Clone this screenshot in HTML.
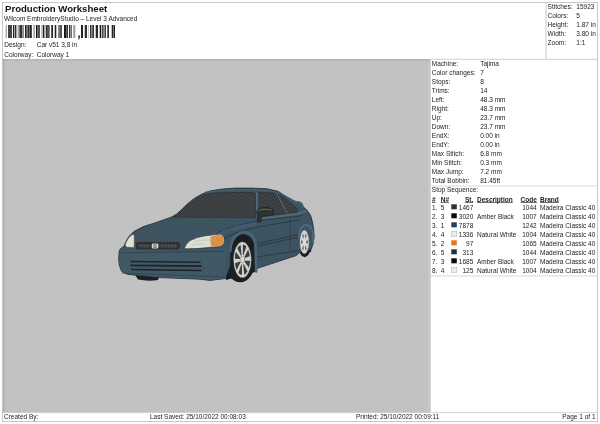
<!DOCTYPE html>
<html><head><meta charset="utf-8"><style>
html,body{margin:0;padding:0;background:#fff;width:600px;height:424px;overflow:hidden}
svg{display:block;font-family:"Liberation Sans",sans-serif;will-change:transform}
</style></head><body>
<svg width="600" height="424" viewBox="0 0 600 424">
<rect x="0" y="0" width="600" height="424" fill="#fff"/>
<rect x="2" y="59.5" width="428.5" height="353" fill="#c2c2c2"/>
<rect x="428.5" y="59.5" width="2" height="353" fill="#c9c9c9"/>
<rect x="2.2" y="59.5" width="2.2" height="353" fill="#b0b0b0"/>
<g fill="none" stroke="#c8c8c8" stroke-width="1">
<rect x="2.5" y="2.5" width="595" height="419"/>
<line x1="546" y1="2" x2="546" y2="58.5"/>
</g>
<line x1="2" y1="59.8" x2="430.5" y2="59.8" stroke="#a4a4a4" stroke-width="1"/>
<line x1="430.5" y1="59.3" x2="598" y2="59.3" stroke="#c4c4c4" stroke-width="0.8"/>
<line x1="430" y1="186" x2="598" y2="186" stroke="#cfcfcf" stroke-width="0.8"/>
<line x1="430" y1="276" x2="598" y2="276" stroke="#cfcfcf" stroke-width="0.8"/>
<line x1="2" y1="412.6" x2="598" y2="412.6" stroke="#c8c8c8" stroke-width="0.8"/>
<rect x="5.6" y="25" width="1.4" height="13" fill="#aaa"/>
<rect x="8.0" y="25" width="4.0" height="13" fill="#444"/>
<rect x="13.0" y="25" width="1.2" height="13" fill="#222"/>
<rect x="14.2" y="25" width="0.8" height="13" fill="#999"/>
<rect x="15.0" y="25" width="1.4" height="13" fill="#333"/>
<rect x="17.6" y="25" width="1.0" height="13" fill="#999"/>
<rect x="18.6" y="25" width="1.4" height="13" fill="#777"/>
<rect x="20.0" y="25" width="2.3" height="13" fill="#333"/>
<rect x="22.3" y="25" width="1.7" height="13" fill="#888"/>
<rect x="25.0" y="25" width="1.7" height="13" fill="#222"/>
<rect x="26.7" y="25" width="1.3" height="13" fill="#777"/>
<rect x="28.0" y="25" width="1.7" height="13" fill="#333"/>
<rect x="30.0" y="25" width="1.8" height="13" fill="#222"/>
<rect x="33.3" y="25" width="1.7" height="13" fill="#aaa"/>
<rect x="36.0" y="25" width="1.3" height="13" fill="#111"/>
<rect x="37.3" y="25" width="2.7" height="13" fill="#555"/>
<rect x="41.0" y="25" width="0.8" height="13" fill="#bbb"/>
<rect x="42.7" y="25" width="1.7" height="13" fill="#222"/>
<rect x="45.7" y="25" width="1.3" height="13" fill="#333"/>
<rect x="47.0" y="25" width="2.7" height="13" fill="#555"/>
<rect x="51.3" y="25" width="1.7" height="13" fill="#222"/>
<rect x="54.7" y="25" width="1.6" height="13" fill="#222"/>
<rect x="58.0" y="25" width="1.3" height="13" fill="#888"/>
<rect x="59.3" y="25" width="2.7" height="13" fill="#555"/>
<rect x="64.0" y="25" width="2.0" height="13" fill="#1a1a1a"/>
<rect x="66.3" y="25" width="1.7" height="13" fill="#333"/>
<rect x="69.0" y="25" width="1.3" height="13" fill="#333"/>
<rect x="70.7" y="25" width="1.0" height="13" fill="#333"/>
<rect x="73.3" y="25" width="2.0" height="13" fill="#999"/>
<rect x="81.0" y="25" width="2.0" height="13" fill="#222"/>
<rect x="84.7" y="25" width="2.3" height="13" fill="#333"/>
<rect x="88.0" y="25" width="0.7" height="13" fill="#bbb"/>
<rect x="90.0" y="25" width="1.3" height="13" fill="#333"/>
<rect x="91.3" y="25" width="1.0" height="13" fill="#777"/>
<rect x="92.3" y="25" width="1.7" height="13" fill="#333"/>
<rect x="95.7" y="25" width="2.3" height="13" fill="#2a2a2a"/>
<rect x="99.7" y="25" width="1.3" height="13" fill="#111"/>
<rect x="101.7" y="25" width="1.3" height="13" fill="#444"/>
<rect x="103.0" y="25" width="1.6" height="13" fill="#888"/>
<rect x="104.6" y="25" width="1.4" height="13" fill="#444"/>
<rect x="107.3" y="25" width="1.7" height="13" fill="#333"/>
<rect x="111.7" y="25" width="1.3" height="13" fill="#222"/>
<rect x="113.0" y="25" width="0.6" height="13" fill="#888"/>
<rect x="113.6" y="25" width="1.4" height="13" fill="#222"/>
<path d="M78.2,35.4 L79.9,35.4 L79.9,37.4 Q79.8,39.2 78.4,39.8 L78.1,39.2 Q78.9,38.7 79,37.4 L78.2,37.4 Z" fill="#222"/>
<defs>
<pattern id="stripeW" patternUnits="userSpaceOnUse" width="2.2" height="2.2" patternTransform="rotate(35)">
<rect width="2.2" height="2.2" fill="#34373a"/><rect width="0.7" height="2.2" fill="#4e5255"/>
</pattern>
<clipPath id="bodyclip"><path d="M119.6,249.8 L121.5,248 L124.2,246 L125.2,243.5 L127.2,239.3 L129.8,235.6 L134,231.4 L143.3,226.6 L155,222.9 L164,219.7 L171.2,217.2 L176.3,214.3 L181,210.2 L186,205.2 L191.5,200.4 L197,196.8 L203,193.5 L210,191 L222,189.1 L235.4,188.1 L252,188.1 L267,188.8 L278,191.3 L285,195.8 L294,200.8 L297,201.8 L301,202.4 L302.6,204.5 L303.2,206.8 L307,210.2 L310.5,215.2 L312.2,221 L313.6,228.3 L314.2,236.8 L313.2,243 L311.5,248.6 L309.5,250 L299.5,252.5 L296.2,255.6 L256.6,268.6 L255,270.5 L255,250 Q254,235 242,234 Q231,236.5 230.6,251 L230.4,266 Q228,272 225.6,278.5 L210,280.4 L200,279.2 L160,277.6 L136.7,275.4 L127.3,274.3 L121.6,271.4 L119.2,265 L118.7,258.5 Z"/></clipPath>
<pattern id="texH" patternUnits="userSpaceOnUse" width="1.6" height="1.6" patternTransform="rotate(-28)">
<rect width="1.6" height="0.55" fill="#7a9298" opacity="0.22"/><rect y="0.8" width="1.6" height="0.5" fill="#101c24" opacity="0.22"/>
</pattern>
<pattern id="texS" patternUnits="userSpaceOnUse" width="1.6" height="1.6" patternTransform="rotate(62)">
<rect width="1.6" height="0.55" fill="#7a9298" opacity="0.2"/><rect y="0.8" width="1.6" height="0.5" fill="#101c24" opacity="0.2"/>
</pattern>
</defs>
<g id="car" stroke-linejoin="round" stroke-linecap="round">
<!-- hidden front-left tire under bumper -->
<path d="M134,273 L160,273 L158,280 Q148,281.5 138,279.5 Z" fill="#1c1f21"/>
<!-- wheel wells -->
<path d="M226,262 Q227,238 242,234 Q254,235 255,250 L255,272 L226,280 Z" fill="#1a1d1f"/>
<path d="M297.5,250 Q298,226.5 305,225.5 Q312,226 312.5,236 L311,252 Z" fill="#1a1d1f"/>
<!-- front tire -->
<ellipse cx="240.2" cy="260.6" rx="15" ry="21.7" fill="#1c1f21"/>
<!-- rear tire -->
<ellipse cx="304.6" cy="242.2" rx="7" ry="15" fill="#1c1f21"/>
<!-- body silhouette -->
<path d="M119.6,249.8 L121.5,248 L124.2,246 L125.2,243.5 L127.2,239.3 L129.8,235.6 L134,231.4 L143.3,226.6 L155,222.9 L164,219.7 L171.2,217.2 L176.3,214.3 L181,210.2 L186,205.2 L191.5,200.4 L197,196.8 L203,193.5 L210,191 L222,189.1 L235.4,188.1 L252,188.1 L267,188.8 L278,191.3 L285,195.8 L294,200.8 L297,201.8 L301,202.4 L302.6,204.5 L303.2,206.8 L307,210.2 L310.5,215.2 L312.2,221 L313.6,228.3 L314.2,236.8 L313.2,243 L311.5,248.6 L309.5,250 L299.5,252.5 L296.2,255.6 L256.6,268.6 L255,270.5 L255,250 Q254,235 242,234 Q231,236.5 230.6,251 L230.4,266 Q228,272 225.6,278.5 L210,280.4 L200,279.2 L160,277.6 L136.7,275.4 L127.3,274.3 L121.6,271.4 L119.2,265 L118.7,258.5 Z" fill="#3b5260" stroke="#1a262e" stroke-width="0.8"/>
<!-- bumper lighter -->
<path d="M120,250.3 L134,249 L181,250.3 L196,249.3 L222,247.8 L227,248 L226,262 L225.6,278.2 L210,280 L200,278.8 L160,277.2 L136.7,275 L127.3,273.9 L121.9,271 L119.6,265 L119.3,258.5 Z" fill="#3f5866"/>
<!-- hood lighter zone near fender -->
<path d="M200,240 Q215,231 240,223 L256,220 L256,226 Q240,228 228,232 Q215,236 210,240 Z" fill="#45637a" opacity="0.6"/>
<!-- texture -->
<g clip-path="url(#bodyclip)">
<path d="M110,180 L236,180 L236,225 L200,250 L110,250 Z" fill="url(#texH)"/>
<path d="M110,250 L226,247 L226,290 L110,290 Z" fill="url(#texH)"/>
<path d="M236,180 L330,180 L330,290 L226,290 L226,247 L200,250 L236,225 Z" fill="url(#texS)"/>
</g>
<!-- windshield -->
<path d="M173.6,217 L178,214.4 L187,206 L193,201.2 L199,197.4 L205.5,194.6 L214,193.1 L235,192.5 L253.5,192.6 Q255.6,192.8 255.8,195 L255.8,217.2 Z" fill="url(#stripeW)" stroke="#25292b" stroke-width="0.6"/>
<!-- side window -->
<path d="M258.2,192.6 L277,193.1 L285,198 L297.2,209 L296.2,212.3 L272,215.2 L258.2,217.2 Z" fill="url(#stripeW)" stroke="#25292b" stroke-width="0.6"/>
<path d="M276.8,193.6 L287.2,213.4" stroke="#58788a" stroke-width="0.8"/>
<!-- A pillar highlight -->
<path d="M255.9,192.6 L257.9,192.6 L257.9,218 L255.9,218 Z" fill="#4a6b7e"/>
<!-- roof edge highlight -->
<path d="M205,192.2 Q230,189 255,189.6 Q275,190.2 284,196 L296,202.5" fill="none" stroke="#44657a" stroke-width="0.9"/>
<!-- spoiler -->
<path d="M295.5,202 Q299.5,201.2 301.6,203.2 Q302.8,205 302.2,207.2" fill="none" stroke="#4f7084" stroke-width="0.9"/>
<!-- crease lines -->
<path d="M217,232.5 Q232,226 244,223.6 L260,220.6" fill="none" stroke="#1e2c35" stroke-width="0.6"/>
<path d="M224,238.5 Q240,230 260,226.6 L300,219.8" fill="none" stroke="#1e2c35" stroke-width="0.6"/>
<path d="M258,219 L297,214 L306,211" fill="none" stroke="#4d6b7a" stroke-width="2"/>
<path d="M258,220.9 L302,215.6" fill="none" stroke="#1e2c35" stroke-width="0.6"/>
<path d="M255,244 L298.4,234.7" fill="none" stroke="#1e2c35" stroke-width="0.6"/>
<path d="M255,246.6 L298.6,237.2" fill="none" stroke="#1e2c35" stroke-width="0.6"/>
<path d="M256.6,257 L300,250.4" fill="none" stroke="#1e2c35" stroke-width="0.6"/>
<path d="M290,218.5 L290.3,250" fill="none" stroke="#243540" stroke-width="0.5"/>
<!-- front wheel arch flare -->
<path d="M230.4,251 Q230.6,236 243,232 Q253.4,232.4 255.4,242.5 L256.2,271.5" fill="none" stroke="#47667a" stroke-width="2.6"/>
<path d="M232.4,252 Q233,238.6 243.2,234.6 Q251.8,235 253.4,243.5 L254.2,270" fill="none" stroke="#1c2a33" stroke-width="0.5"/>
<!-- rear wheel arch -->
<path d="M299,237 Q299.6,226 304.6,225 Q311.5,225.2 312.8,232 L313.2,243" fill="none" stroke="#4a6a7e" stroke-width="1.8"/>
<!-- mirror -->
<path d="M256.6,212 Q257.4,207.6 265,207.2 Q272.6,207.2 273.4,211.6 L273,214.6 Q268,215.6 261.8,216.2 L261,221.8 L257.6,221.8 L257.2,216 Z" fill="#2f332d" stroke="#171a17" stroke-width="0.5"/>
<path d="M259.2,210.2 Q264.5,208.4 271.4,209.8" fill="none" stroke="#60665a" stroke-width="1.1"/>
<!-- left headlight -->
<path d="M125.2,245.2 Q126.8,238.5 132.6,234.2 L134.3,235.4 L134.2,247.4 L126.8,247.3 Z" fill="#dfe2d4" stroke="#28323a" stroke-width="0.4"/>
<!-- right headlight -->
<path d="M184.4,247.9 Q186.5,243 190,240.5 Q197,237 205,235.8 L220,234.1 Q223.5,234.8 224,238 L224.4,242.6 Q223.2,245.8 220,246.5 L196.7,248.6 L185.5,248.8 Z" fill="#dcded2" stroke="#1e2a32" stroke-width="0.6"/>
<path d="M195,241.5 Q203,239.5 212,240 M192,245 Q200,243 206,244.5" fill="none" stroke="#b4b8ae" stroke-width="0.5"/>
<path d="M210.4,236.7 L220,234.5 Q223,235.1 223.6,238 L224,242.6 Q222.9,245.4 220,246.1 L211.6,247.3 Q210,242 210.4,236.7 Z" fill="#dc9246"/>
<!-- grille -->
<path d="M137,241.4 L178,241.5 Q180.8,242.2 180.6,245.8 Q180.2,249.6 177.4,250 L137.4,249.8 Q135,249.2 135.2,245.4 Q135.4,241.8 137,241.4 Z" fill="#2d3133" stroke="#4a5053" stroke-width="0.9"/>
<path d="M138.6,244.3 L150.6,244.5 L150.6,247.4 L138.6,247.2 Z" fill="#3e4447"/>
<path d="M159.4,244.3 L177.2,244.5 L177,247.6 L159.4,247.4 Z" fill="#3e4447"/>
<path d="M141,244.5 L141,247.3 M144,244.5 L144,247.3 M147,244.5 L147,247.3 M162,244.5 L162,247.4 M165.5,244.5 L165.5,247.4 M169,244.5 L169,247.4 M172.5,244.5 L172.5,247.4 M175.5,244.5 L175.5,247.4" stroke="#595f62" stroke-width="0.6"/>
<path d="M152.6,243.5 L157.6,243.5 Q158.6,243.7 158.5,246 Q158.4,248.4 157.4,248.6 L152.6,248.6 Q151.6,248.4 151.6,246 Q151.7,243.7 152.6,243.5 Z" fill="#d2d4ce"/>
<path d="M156.6,244.8 Q155,244.2 153.6,245 Q153.2,246 155,246.1 Q156.8,246.2 156.4,247.2 Q155,248 153.4,247.3" fill="none" stroke="#3a4044" stroke-width="0.6"/>
<!-- bumper vents -->
<path d="M130.8,261.5 L200,262.2" stroke="#1e2428" stroke-width="1.6"/>
<path d="M130.8,265.4 L201,266.1" stroke="#1e2428" stroke-width="1.6"/>
<path d="M131.5,269.6 L201,270.6" stroke="#1e2428" stroke-width="1.5"/>
<path d="M120,252.8 L224,251.3" stroke="#263640" stroke-width="0.6"/>
<path d="M122,273.2 L224,277" stroke="#263640" stroke-width="0.5"/>
<!-- front rim -->
<ellipse cx="242.4" cy="259.8" rx="8.8" ry="17.8" fill="#d3d4cf" stroke="#8e9394" stroke-width="0.4"/>
<path d="M242.85,254.90 L242.86,244.52 Q244.79,244.45 246.35,246.75 L243.42,255.26 Z" fill="#3a3e41"/>
<path d="M244.43,256.98 L248.07,249.66 Q249.46,252.37 249.76,256.23 L244.71,258.05 Z" fill="#3a3e41"/>
<path d="M244.82,260.71 L249.95,260.73 Q249.99,264.64 248.85,267.80 L244.64,261.87 Z" fill="#3a3e41"/>
<path d="M243.80,263.91 L247.41,271.27 Q246.07,274.07 244.17,274.69 L243.26,264.47 Z" fill="#3a3e41"/>
<path d="M241.95,264.70 L241.94,275.08 Q240.01,275.15 238.45,272.85 L241.38,264.34 Z" fill="#3a3e41"/>
<path d="M240.37,262.62 L236.73,269.94 Q235.34,267.23 235.04,263.37 L240.09,261.55 Z" fill="#3a3e41"/>
<path d="M239.98,258.89 L234.85,258.87 Q234.81,254.96 235.95,251.80 L240.16,257.73 Z" fill="#3a3e41"/>
<path d="M241.00,255.69 L237.39,248.33 Q238.73,245.53 240.63,244.91 L241.54,255.13 Z" fill="#3a3e41"/>
<ellipse cx="242.5" cy="259.6" rx="2.3" ry="3.4" fill="#dadbd6" stroke="#6a7074" stroke-width="0.5"/>
<!-- rear rim -->
<ellipse cx="304.4" cy="242" rx="4.5" ry="11.8" fill="#d4d5d0" stroke="#8e9394" stroke-width="0.3"/>
<path d="M305.03,238.09 L305.37,233.65 Q306.14,234.08 306.67,235.61 L305.37,238.61 Z" fill="#5e6265"/>
<path d="M306.01,241.48 L307.64,240.04 Q307.89,242.00 307.64,243.96 L306.01,242.52 Z" fill="#5e6265"/>
<path d="M305.37,245.39 L306.67,248.39 Q306.14,249.92 305.37,250.35 L305.03,245.91 Z" fill="#5e6265"/>
<path d="M303.77,245.91 L303.43,250.35 Q302.66,249.92 302.13,248.39 L303.43,245.39 Z" fill="#5e6265"/>
<path d="M302.79,242.52 L301.16,243.96 Q300.91,242.00 301.16,240.04 L302.79,241.48 Z" fill="#5e6265"/>
<path d="M303.43,238.61 L302.13,235.61 Q302.66,234.08 303.43,233.65 L303.77,238.09 Z" fill="#5e6265"/>
<ellipse cx="304.5" cy="242" rx="1.1" ry="2" fill="#e0e1dc"/>
</g>

<rect x="451.3" y="204.3" width="5.5" height="5" fill="#2b2e3c"/>
<rect x="451.3" y="213.3" width="5.5" height="5" fill="#0b0b0b"/>
<rect x="451.3" y="222.3" width="5.5" height="5" fill="#21405f"/>
<rect x="451.3" y="231.3" width="5.5" height="5" fill="#ececf0" stroke="#b8b8c0" stroke-width="0.6"/>
<rect x="451.3" y="240.3" width="5.5" height="5" fill="#e2761e"/>
<rect x="451.3" y="249.3" width="5.5" height="5" fill="#2b2e3c"/>
<rect x="451.3" y="258.3" width="5.5" height="5" fill="#0b0b0b"/>
<rect x="451.3" y="267.3" width="5.5" height="5" fill="#ececf0" stroke="#b8b8c0" stroke-width="0.6"/>

<text x="5" y="11.6" font-size="9.6" font-weight="bold" fill="#111">Production Worksheet</text>
<text x="4" y="21.3" font-size="6.5" fill="#222">Wilcom EmbroideryStudio – Level 3 Advanced</text>
<text x="4.3" y="47.4" font-size="6.5" fill="#222">Design:</text>
<text x="36.7" y="47.4" font-size="6.5" fill="#222">Car v51 3,8 in</text>
<text x="4.3" y="56.9" font-size="6.5" fill="#222">Colorway:</text>
<text x="36.7" y="56.9" font-size="6.5" fill="#222">Colorway 1</text>
<text x="547.6" y="8.8" font-size="6.5" fill="#222">Stitches:</text>
<text x="576.3" y="8.8" font-size="6.5" fill="#222">15923</text>
<text x="547.6" y="17.75" font-size="6.5" fill="#222">Colors:</text>
<text x="576.3" y="17.75" font-size="6.5" fill="#222">5</text>
<text x="547.6" y="26.7" font-size="6.5" fill="#222">Height:</text>
<text x="576.3" y="26.7" font-size="6.5" fill="#222">1.87 in</text>
<text x="547.6" y="35.65" font-size="6.5" fill="#222">Width:</text>
<text x="576.3" y="35.65" font-size="6.5" fill="#222">3.80 in</text>
<text x="547.6" y="44.6" font-size="6.5" fill="#222">Zoom:</text>
<text x="576.3" y="44.6" font-size="6.5" fill="#222">1:1</text>
<text x="431.8" y="65.9" font-size="6.5" fill="#222">Machine:</text>
<text x="480.2" y="65.9" font-size="6.5" fill="#222">Tajima</text>
<text x="431.8" y="74.9" font-size="6.5" fill="#222">Color changes:</text>
<text x="480.2" y="74.9" font-size="6.5" fill="#222">7</text>
<text x="431.8" y="83.9" font-size="6.5" fill="#222">Stops:</text>
<text x="480.2" y="83.9" font-size="6.5" fill="#222">8</text>
<text x="431.8" y="92.9" font-size="6.5" fill="#222">Trims:</text>
<text x="480.2" y="92.9" font-size="6.5" fill="#222">14</text>
<text x="431.8" y="101.9" font-size="6.5" fill="#222">Left:</text>
<text x="480.2" y="101.9" font-size="6.5" fill="#222">48.3 mm</text>
<text x="431.8" y="110.9" font-size="6.5" fill="#222">Right:</text>
<text x="480.2" y="110.9" font-size="6.5" fill="#222">48.3 mm</text>
<text x="431.8" y="119.9" font-size="6.5" fill="#222">Up:</text>
<text x="480.2" y="119.9" font-size="6.5" fill="#222">23.7 mm</text>
<text x="431.8" y="128.9" font-size="6.5" fill="#222">Down:</text>
<text x="480.2" y="128.9" font-size="6.5" fill="#222">23.7 mm</text>
<text x="431.8" y="137.9" font-size="6.5" fill="#222">EndX:</text>
<text x="480.2" y="137.9" font-size="6.5" fill="#222">0.00 in</text>
<text x="431.8" y="146.9" font-size="6.5" fill="#222">EndY:</text>
<text x="480.2" y="146.9" font-size="6.5" fill="#222">0.00 in</text>
<text x="431.8" y="155.9" font-size="6.5" fill="#222">Max Stitch:</text>
<text x="480.2" y="155.9" font-size="6.5" fill="#222">6.8 mm</text>
<text x="431.8" y="164.9" font-size="6.5" fill="#222">Min Stitch:</text>
<text x="480.2" y="164.9" font-size="6.5" fill="#222">0.3 mm</text>
<text x="431.8" y="173.9" font-size="6.5" fill="#222">Max Jump:</text>
<text x="480.2" y="173.9" font-size="6.5" fill="#222">7.2 mm</text>
<text x="431.8" y="182.9" font-size="6.5" fill="#222">Total Bobbin:</text>
<text x="480.2" y="182.9" font-size="6.5" fill="#222">81.45ft</text>
<text x="431.8" y="191.9" font-size="6.5" fill="#222">Stop Sequence:</text>
<text x="432" y="201.5" font-size="6.5" font-weight="bold" fill="#222">#</text>
<rect x="432.00" y="202.05" width="3.63" height="0.65" fill="#222"/>
<text x="440.7" y="201.5" font-size="6.5" font-weight="bold" fill="#222">N#</text>
<rect x="440.70" y="202.05" width="8.31" height="0.65" fill="#222"/>
<text x="473.3" y="201.5" font-size="6.5" text-anchor="end" font-weight="bold" fill="#222">St.</text>
<rect x="464.99" y="202.05" width="8.31" height="0.65" fill="#222"/>
<text x="477" y="201.5" font-size="6.5" font-weight="bold" fill="#222">Description</text>
<rect x="477.00" y="202.05" width="35.77" height="0.65" fill="#222"/>
<text x="520.6" y="201.5" font-size="6.5" font-weight="bold" fill="#222">Code</text>
<rect x="520.60" y="202.05" width="16.25" height="0.65" fill="#222"/>
<text x="540" y="201.5" font-size="6.5" font-weight="bold" fill="#222">Brand</text>
<rect x="540.00" y="202.05" width="18.78" height="0.65" fill="#222"/>
<text x="432" y="209.9" font-size="6.5" fill="#222">1.</text>
<text x="440.7" y="209.9" font-size="6.5" fill="#222">5</text>
<text x="473.3" y="209.9" font-size="6.5" text-anchor="end" fill="#222">1467</text>
<text x="522.2" y="209.9" font-size="6.5" fill="#222">1044</text>
<text x="540" y="209.9" font-size="6.5" fill="#222">Madeira Classic 40</text>
<text x="432" y="218.9" font-size="6.5" fill="#222">2.</text>
<text x="440.7" y="218.9" font-size="6.5" fill="#222">3</text>
<text x="473.3" y="218.9" font-size="6.5" text-anchor="end" fill="#222">3020</text>
<text x="477" y="218.9" font-size="6.5" fill="#222">Amber Black</text>
<text x="522.2" y="218.9" font-size="6.5" fill="#222">1007</text>
<text x="540" y="218.9" font-size="6.5" fill="#222">Madeira Classic 40</text>
<text x="432" y="227.9" font-size="6.5" fill="#222">3.</text>
<text x="440.7" y="227.9" font-size="6.5" fill="#222">1</text>
<text x="473.3" y="227.9" font-size="6.5" text-anchor="end" fill="#222">7878</text>
<text x="522.2" y="227.9" font-size="6.5" fill="#222">1242</text>
<text x="540" y="227.9" font-size="6.5" fill="#222">Madeira Classic 40</text>
<text x="432" y="236.9" font-size="6.5" fill="#222">4.</text>
<text x="440.7" y="236.9" font-size="6.5" fill="#222">4</text>
<text x="473.3" y="236.9" font-size="6.5" text-anchor="end" fill="#222">1336</text>
<text x="477" y="236.9" font-size="6.5" fill="#222">Natural White</text>
<text x="522.2" y="236.9" font-size="6.5" fill="#222">1004</text>
<text x="540" y="236.9" font-size="6.5" fill="#222">Madeira Classic 40</text>
<text x="432" y="245.9" font-size="6.5" fill="#222">5.</text>
<text x="440.7" y="245.9" font-size="6.5" fill="#222">2</text>
<text x="473.3" y="245.9" font-size="6.5" text-anchor="end" fill="#222">97</text>
<text x="522.2" y="245.9" font-size="6.5" fill="#222">1065</text>
<text x="540" y="245.9" font-size="6.5" fill="#222">Madeira Classic 40</text>
<text x="432" y="254.9" font-size="6.5" fill="#222">6.</text>
<text x="440.7" y="254.9" font-size="6.5" fill="#222">5</text>
<text x="473.3" y="254.9" font-size="6.5" text-anchor="end" fill="#222">313</text>
<text x="522.2" y="254.9" font-size="6.5" fill="#222">1044</text>
<text x="540" y="254.9" font-size="6.5" fill="#222">Madeira Classic 40</text>
<text x="432" y="263.9" font-size="6.5" fill="#222">7.</text>
<text x="440.7" y="263.9" font-size="6.5" fill="#222">3</text>
<text x="473.3" y="263.9" font-size="6.5" text-anchor="end" fill="#222">1685</text>
<text x="477" y="263.9" font-size="6.5" fill="#222">Amber Black</text>
<text x="522.2" y="263.9" font-size="6.5" fill="#222">1007</text>
<text x="540" y="263.9" font-size="6.5" fill="#222">Madeira Classic 40</text>
<text x="432" y="272.9" font-size="6.5" fill="#222">8.</text>
<text x="440.7" y="272.9" font-size="6.5" fill="#222">4</text>
<text x="473.3" y="272.9" font-size="6.5" text-anchor="end" fill="#222">125</text>
<text x="477" y="272.9" font-size="6.5" fill="#222">Natural White</text>
<text x="522.2" y="272.9" font-size="6.5" fill="#222">1004</text>
<text x="540" y="272.9" font-size="6.5" fill="#222">Madeira Classic 40</text>
<text x="4" y="418.6" font-size="6.5" fill="#222">Created By:</text>
<text x="150" y="418.6" font-size="6.5" fill="#222">Last Saved: 25/10/2022 00:08:03</text>
<text x="356" y="418.6" font-size="6.5" fill="#222">Printed: 25/10/2022 00:09:11</text>
<text x="595.5" y="418.6" font-size="6.5" text-anchor="end" fill="#222">Page 1 of 1</text>

</svg>
</body></html>
